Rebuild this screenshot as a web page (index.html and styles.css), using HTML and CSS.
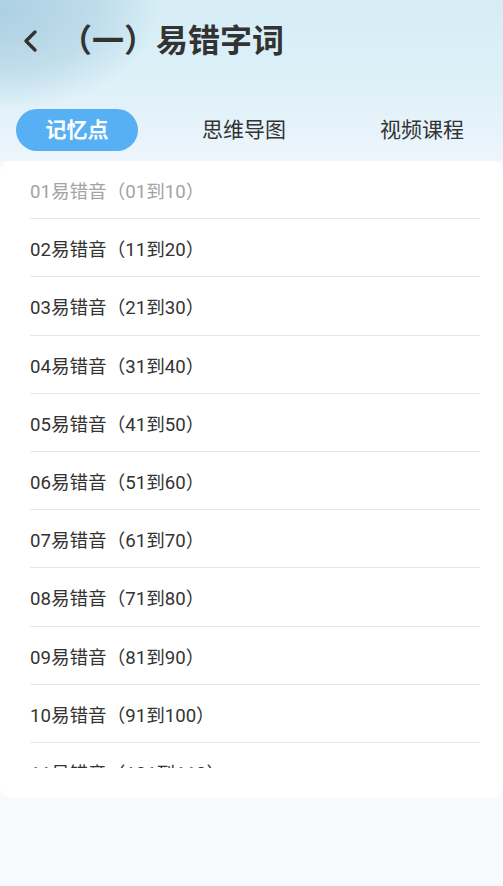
FILE: index.html
```html
<!DOCTYPE html>
<html lang="zh-CN">
<head>
<meta charset="utf-8">
<title>（一）易错字词</title>
<link rel="stylesheet" href="styles.css">
</head>
<body>
<div class="page">
  <div class="hero">
    <div class="topbar">
      <svg class="back" width="16" height="24" viewBox="0 0 16 24" aria-hidden="true">
        <path d="M13 3 L4 12 L13 21" fill="none" stroke="#333" stroke-width="3.4" stroke-linecap="round" stroke-linejoin="round"/>
      </svg>
      <h1 class="title">（一）易错字词</h1>
    </div>
    <div class="tabs">
      <div class="tab active">记忆点</div>
      <div class="tab">思维导图</div>
      <div class="tab">视频课程</div>
    </div>
  </div>
  <div class="card">
    <ul class="list">
      <li class="item muted">01易错音（01到10）</li>
      <li class="item">02易错音（11到20）</li>
      <li class="item">03易错音（21到30）</li>
      <li class="item">04易错音（31到40）</li>
      <li class="item">05易错音（41到50）</li>
      <li class="item">06易错音（51到60）</li>
      <li class="item">07易错音（61到70）</li>
      <li class="item">08易错音（71到80）</li>
      <li class="item">09易错音（81到90）</li>
      <li class="item">10易错音（91到100）</li>
      <li class="item">11易错音（101到110）</li>
    </ul>
  </div>
</div>
</body>
</html>
```

FILE: styles.css
```css
html, body {
  margin: 0;
  padding: 0;
}
body {
  width: 503px;
  height: 886px;
  overflow: hidden;
  background: #f7fafd;
  font-family: Roboto, "Noto Sans CJK SC", sans-serif;
  color: #333;
}
.page {
  height: 886px;
  background: #f7fafd;
}
.hero {
  height: 161px;
  background:
    radial-gradient(ellipse 160px 100px at 0px 10px, rgba(170, 206, 225, 0.95) 0%, rgba(170, 206, 225, 0.55) 60%, rgba(170, 206, 225, 0) 100%),
    linear-gradient(180deg, #d6edf6 0%, #dcf0f8 45%, #e6f3fa 80%, #edf6fc 100%);
  padding-top: 1px;
  box-sizing: border-box;
}
.topbar {
  height: 79px;
  display: flex;
  align-items: center;
  padding-left: 22px;
}
.back {
  display: block;
  margin-right: 22px;
}
.title {
  margin: 0;
  font-size: 32px;
  font-weight: 700;
  color: #333;
  line-height: 40px;
}
.tabs {
  display: flex;
  align-items: center;
  margin-top: 29px;
  padding-left: 16px;
  gap: 34px;
}
.tab {
  height: 42px;
  line-height: 42px;
  font-size: 21px;
  color: #333;
  padding: 0 30px;
  white-space: nowrap;
}
.tab.active {
  width: 122px;
  box-sizing: border-box;
  padding: 0;
  text-align: center;
  border-radius: 21px;
  background: #58b0f4;
  color: #fff;
  font-weight: 700;
}
.card {
  height: 637px;
  background: #fff;
  border-radius: 12px;
  box-sizing: border-box;
  padding-bottom: 30px;
}
.list {
  list-style: none;
  margin: 0;
  padding: 0 23px 0 30px;
  height: 607px;
  overflow: hidden;
}
.item {
  height: 58.2px;
  box-sizing: border-box;
  border-bottom: 1px solid #e6e6e6;
  display: flex;
  align-items: center;
  font-size: 18.6px;
  color: #333;
  white-space: nowrap;
}
.item.muted {
  color: #a3a3a3;
}
```
